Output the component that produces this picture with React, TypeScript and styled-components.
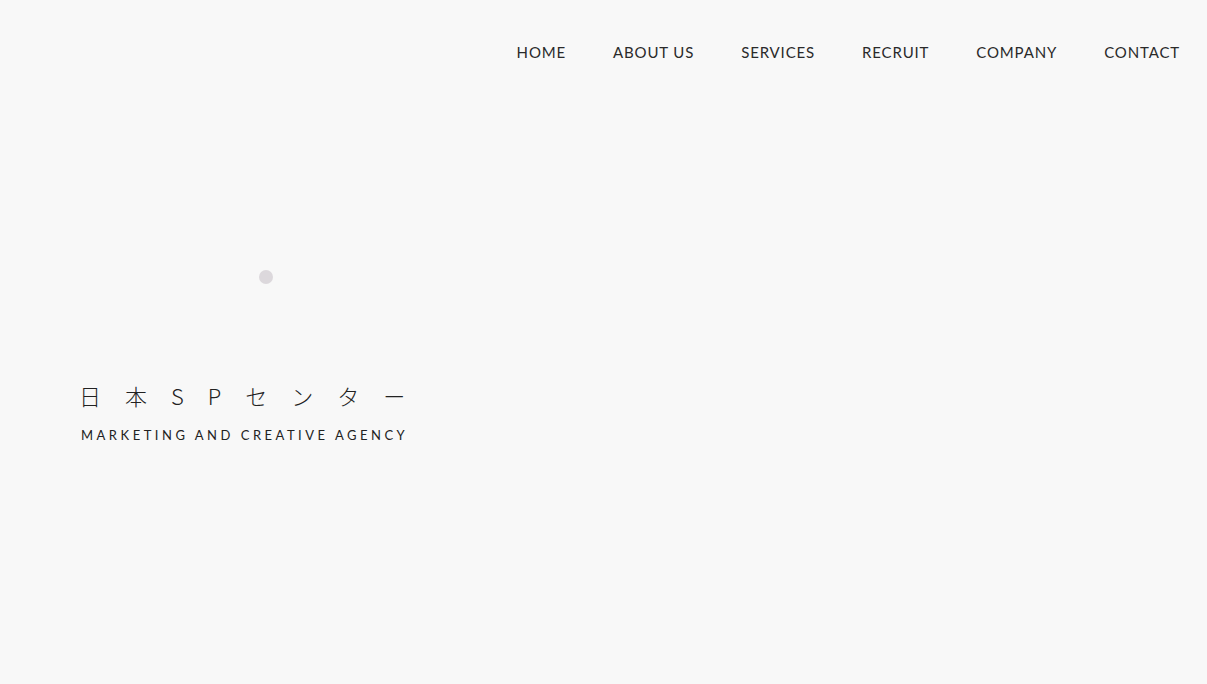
import styled, { createGlobalStyle } from 'styled-components'

const GlobalStyles = createGlobalStyle`
  html, body {
    margin: 0;
    padding: 0;
    background: #f8f8f8;
  }
  body {
    font-family: Lato, "Open Sans", "Liberation Sans", sans-serif;
    color: #222;
  }
`

const Page = styled.div`
  width: 1207px;
  height: 684px;
  background: #f8f8f8;
  overflow: hidden;
  display: flex;
  flex-direction: column;
`

const Header = styled.header`
  display: flex;
  justify-content: flex-end;
  padding: 43px 27px 0 0;
`

const Nav = styled.nav`
  display: flex;
  gap: 47px;
`

const NavLink = styled.a`
  font-family: Lato, "Open Sans", "Liberation Sans", sans-serif;
  font-size: 15px;
  line-height: 18px;
  font-weight: 400;
  letter-spacing: 0.85px;
  color: #2a2a2a;
  text-decoration: none;
  white-space: nowrap;
`

const Hero = styled.section`
  display: flex;
  flex-direction: column;
  padding-left: 79px;
  margin-top: 209px;
`

const Dot = styled.span`
  display: block;
  width: 14px;
  height: 14px;
  border-radius: 50%;
  background: #dcd8dc;
  margin-left: 180px;
`

const Title = styled.h1`
  margin: 97px 0 0;
  font-family: "Noto Sans CJK JP", "Noto Sans", sans-serif;
  font-weight: 300;
  font-size: 22px;
  line-height: 28px;
  letter-spacing: 24px;
  color: #222;
  white-space: nowrap;
`

const Tagline = styled.p`
  margin: 18px 0 0 2px;
  font-family: Lato, "Open Sans", "Liberation Sans", sans-serif;
  font-size: 13px;
  line-height: 16px;
  font-weight: 400;
  letter-spacing: 3.5px;
  color: #222;
  white-space: nowrap;
`

const links = ['HOME', 'ABOUT US', 'SERVICES', 'RECRUIT', 'COMPANY', 'CONTACT']

function App() {
  return (
    <Page>
      <GlobalStyles />
      <Header>
        <Nav>
          {links.map((l) => (
            <NavLink key={l} href="#">{l}</NavLink>
          ))}
        </Nav>
      </Header>
      <Hero>
        <Dot />
        <Title>日本SPセンター</Title>
        <Tagline>MARKETING AND CREATIVE AGENCY</Tagline>
      </Hero>
    </Page>
  )
}

export default App
